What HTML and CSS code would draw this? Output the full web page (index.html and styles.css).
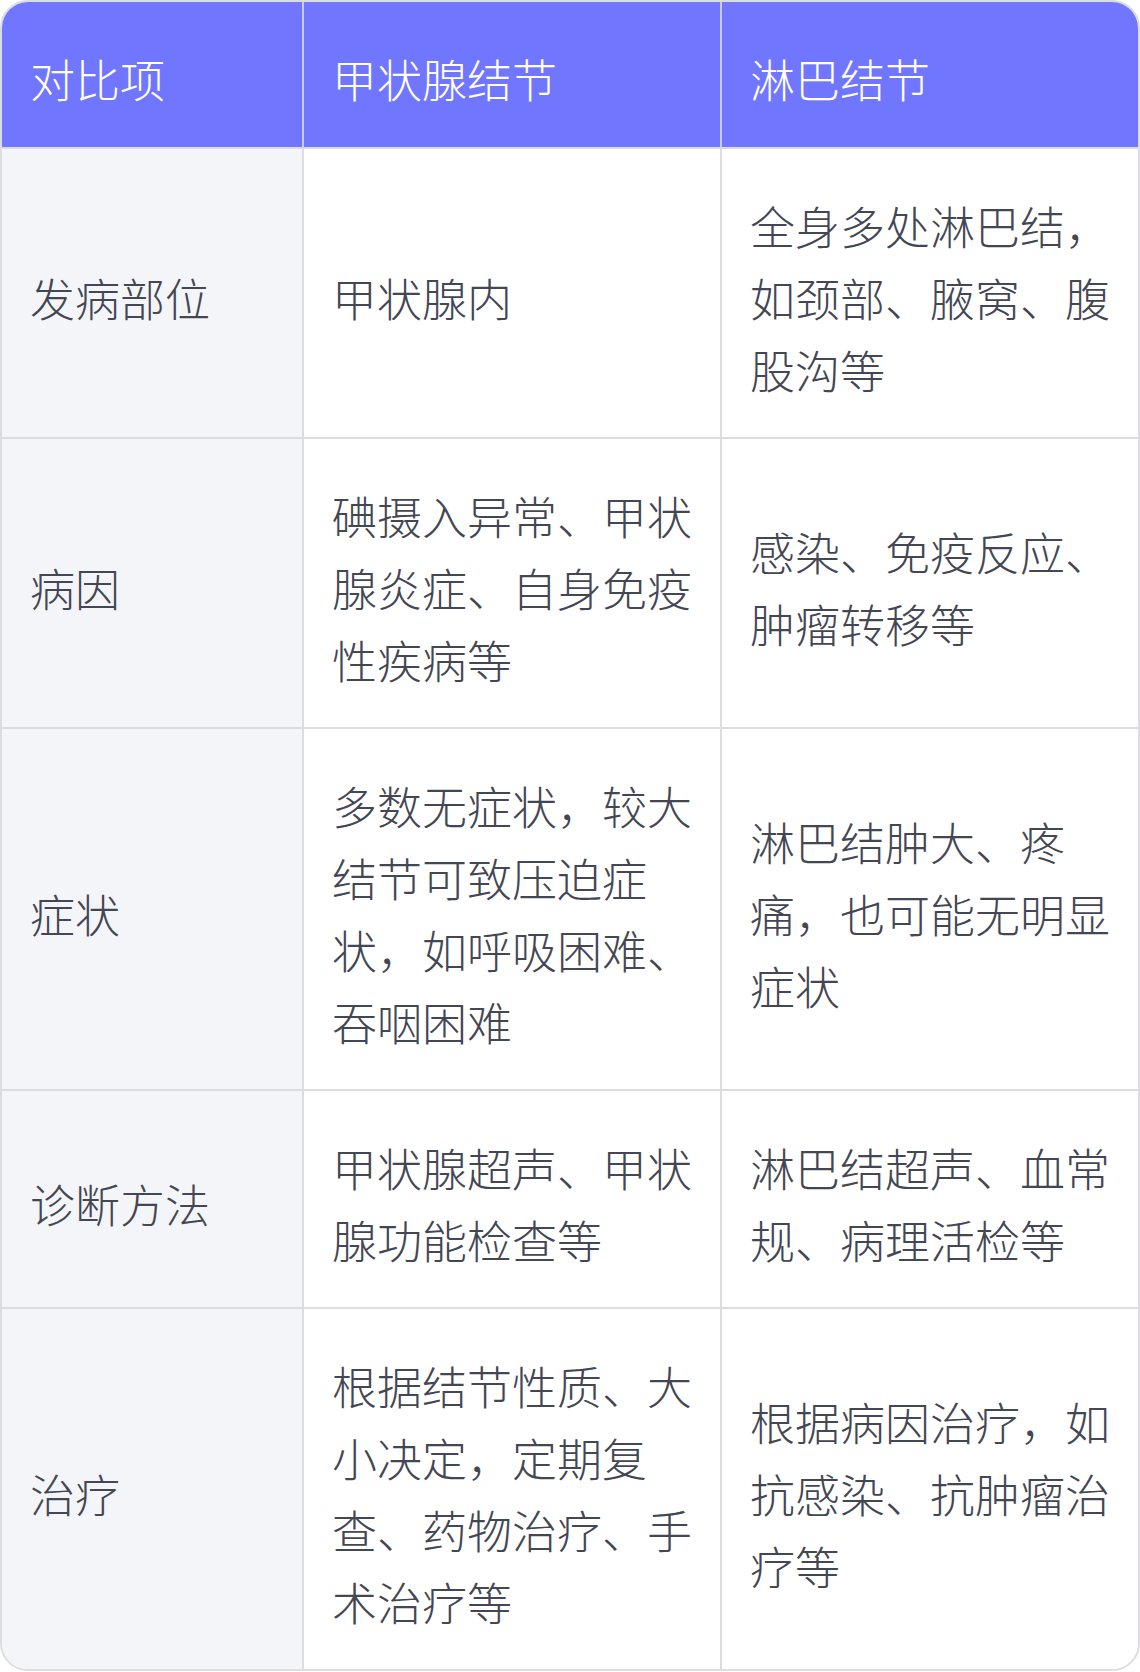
FILE: index.html
```html
<!DOCTYPE html>
<html lang="zh-CN">
<head>
<meta charset="utf-8">
<title>甲状腺结节与淋巴结节对比</title>
<link rel="stylesheet" href="styles.css">
</head>
<body>
<div class="table">
  <div class="cell head">对比项</div>
  <div class="cell head">甲状腺结节</div>
  <div class="cell head last-col">淋巴结节</div>

  <div class="cell label">发病部位</div>
  <div class="cell">甲状腺内</div>
  <div class="cell last-col">全身多处淋巴结，如颈部、腋窝、腹股沟等</div>

  <div class="cell label">病因</div>
  <div class="cell">碘摄入异常、甲状腺炎症、自身免疫性疾病等</div>
  <div class="cell last-col">感染、免疫反应、肿瘤转移等</div>

  <div class="cell label">症状</div>
  <div class="cell">多数无症状，较大结节可致压迫症状，如呼吸困难、吞咽困难</div>
  <div class="cell last-col">淋巴结肿大、疼痛，也可能无明显症状</div>

  <div class="cell label">诊断方法</div>
  <div class="cell">甲状腺超声、甲状腺功能检查等</div>
  <div class="cell last-col">淋巴结超声、血常规、病理活检等</div>

  <div class="cell label last-row">治疗</div>
  <div class="cell last-row">根据结节性质、大小决定，定期复查、药物治疗、手术治疗等</div>
  <div class="cell last-col last-row">根据病因治疗，如抗感染、抗肿瘤治疗等</div>
</div>
</body>
</html>
```

FILE: styles.css
```css
html, body {
  margin: 0;
  padding: 0;
  background: #ffffff;
}

.table {
  display: grid;
  grid-template-columns: 302px 418px 416px;
  width: 1140px;
  box-sizing: border-box;
  border: 2px solid #dcdce1;
  border-radius: 28px;
  overflow: hidden;
  font-family: "Noto Sans CJK SC", "Noto Sans", sans-serif;
  font-size: 45px;
  font-weight: 300;
  line-height: 72px;
  color: #434653;
}

.cell {
  display: flex;
  align-items: center;
  padding: 41px 28px 31px;
  border-right: 2px solid #dcdce1;
  border-bottom: 2px solid #dcdce1;
  background: #ffffff;
  min-width: 0;
}

.head {
  padding-bottom: 32px;
  background: #7176ff;
  color: #ffffff;
  border-right-color: #c9cbf2;
}

.label {
  background: #f4f5f9;
}

.last-col {
  border-right: none;
}

.last-row {
  border-bottom: none;
}
```
